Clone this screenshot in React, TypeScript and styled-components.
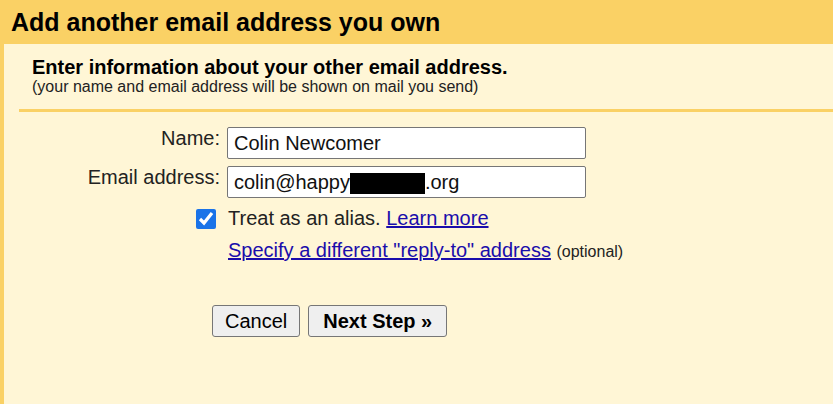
import styled, { createGlobalStyle, css } from 'styled-components';

const yellow = '#fad165';
const cream = '#fff6d6';

const GlobalStyle = createGlobalStyle`
  html, body {
    margin: 0;
    padding: 0;
    background: ${cream};
  }
  body {
    font-family: "Liberation Sans", Arial, sans-serif;
    color: #222;
  }
`;

const Page = styled.div`
  display: flex;
  flex-direction: column;
  min-height: 100vh;
`;

const Header = styled.h1`
  margin: 0;
  height: 43px;
  padding: 1px 0 0 11px;
  background: ${yellow};
  font-size: 25px;
  font-weight: bold;
  line-height: 43px;
  color: #000;
`;

const Body = styled.div`
  flex: 1;
  border-left: 4px solid ${yellow};
  background: ${cream};
`;

const Intro = styled.div`
  padding: 13px 0 0 28px;
`;

const IntroTitle = styled.div`
  font-size: 20px;
  font-weight: bold;
  line-height: 20px;
  color: #000;
`;

const IntroNote = styled.div`
  margin-top: 2px;
  font-size: 16px;
  line-height: 16px;
  color: #222;
`;

const Separator = styled.hr`
  margin: 14px 0 0 15px;
  height: 3px;
  border: 0;
  background: ${yellow};
`;

const FormRow = styled.div<{ $top: number }>`
  display: grid;
  grid-template-columns: 216px 359px;
  column-gap: 7px;
  margin-top: ${p => p.$top}px;
`;

const Label = styled.label`
  justify-self: end;
  align-self: start;
  font-size: 20px;
  line-height: 23px;
  color: #222;
`;

const fieldBox = css`
  box-sizing: border-box;
  width: 359px;
  height: 32px;
  margin: 0;
  padding: 0 6px;
  border: 1px solid #767676;
  border-radius: 2px;
  background: #fff;
  font-family: "Liberation Sans", Arial, sans-serif;
  font-size: 20px;
  color: #111;
`;

const TextInput = styled.input`
  ${fieldBox};
  outline: none;
`;

const MaskedField = styled.div`
  ${fieldBox};
  display: flex;
  align-items: center;
  white-space: pre;
`;

const Redacted = styled.span`
  display: inline-block;
  width: 75px;
  height: 21px;
  margin: 2px 0 0 0;
  background: #000;
`;

const Check = styled.input`
  justify-self: end;
  align-self: start;
  width: 20px;
  height: 20px;
  margin: 2px 4px 0 0;
  accent-color: #1a73e8;
`;

const Line = styled.div`
  grid-column: 2;
  padding-left: 1px;
  font-size: 20px;
  line-height: 23px;
  color: #222;
  white-space: nowrap;
`;

const Link = styled.a`
  color: #1a0dab;
  text-decoration: underline;
  cursor: pointer;
`;

const Optional = styled.span`
  font-size: 16px;
  color: #222;
`;

const Actions = styled.div`
  display: flex;
  gap: 8px;
  margin-top: 42px;
  padding-left: 208px;
`;

const Button = styled.button<{ $primary?: boolean }>`
  height: 32px;
  padding: 0 ${p => (p.$primary ? 14 : 12)}px;
  border: 1px solid #767676;
  border-radius: 3px;
  background: #efefef;
  font-family: "Liberation Sans", Arial, sans-serif;
  font-size: 20px;
  font-weight: ${p => (p.$primary ? 'bold' : 'normal')};
  color: #000;
  cursor: pointer;
`;

export default function App() {
  return (
    <Page>
      <GlobalStyle />
      <Header>Add another email address you own</Header>
      <Body>
        <Intro>
          <IntroTitle>Enter information about your other email address.</IntroTitle>
          <IntroNote>(your name and email address will be shown on mail you send)</IntroNote>
        </Intro>
        <Separator />
        <FormRow $top={15}>
          <Label htmlFor="name">Name:</Label>
          <TextInput id="name" defaultValue="Colin Newcomer" />
        </FormRow>
        <FormRow $top={7}>
          <Label>Email address:</Label>
          <MaskedField>
            {'colin@happy'}<Redacted />{'.org'}
          </MaskedField>
        </FormRow>
        <FormRow $top={9}>
          <Check type="checkbox" defaultChecked />
          <Line>
            Treat as an alias. <Link>Learn more</Link>
          </Line>
        </FormRow>
        <FormRow $top={9}>
          <Line>
            <Link>Specify a different "reply-to" address</Link> <Optional>(optional)</Optional>
          </Line>
        </FormRow>
        <Actions>
          <Button>Cancel</Button>
          <Button $primary>Next Step »</Button>
        </Actions>
      </Body>
    </Page>
  );
}
